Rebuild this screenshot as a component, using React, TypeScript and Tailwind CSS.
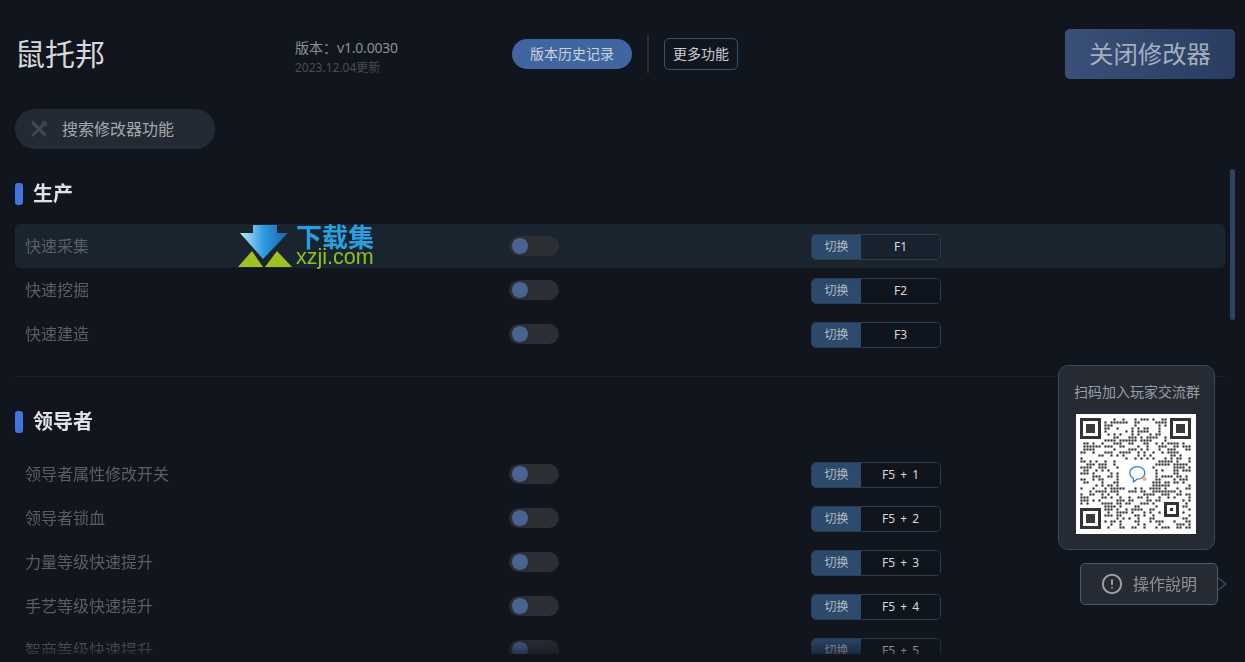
import { CircleAlert } from "lucide-react";

const font = { fontFamily: '"Noto Sans", "Noto Sans CJK SC", sans-serif' };

const sections = [
  {
    title: "生产",
    rows: [
      { name: "快速采集", key: "F1", active: true },
      { name: "快速挖掘", key: "F2" },
      { name: "快速建造", key: "F3" },
    ],
  },
  {
    title: "领导者",
    rows: [
      { name: "领导者属性修改开关", key: "F5 + 1" },
      { name: "领导者锁血", key: "F5 + 2" },
      { name: "力量等级快速提升", key: "F5 + 3" },
      { name: "手艺等级快速提升", key: "F5 + 4" },
      { name: "智商等级快速提升", key: "F5 + 5" },
    ],
  },
];

// fake but stable QR pattern
const QR_SIZE = 37;
function isReserved(x: number, y: number) {
  const finder = (x < 8 && y < 8) || (x > 28 && y < 8) || (x < 8 && y > 28);
  const center = Math.abs(x - 18) <= 5 && Math.abs(y - 18) <= 4;
  const align = x > 26 && x < 34 && y > 26 && y < 34;
  return finder || center || align;
}
function qrCells() {
  const cells: { x: number; y: number }[] = [];
  let seed = 20231204;
  for (let y = 0; y < QR_SIZE; y++) {
    for (let x = 0; x < QR_SIZE; x++) {
      seed = (seed * 1103515245 + 12345) & 0x7fffffff;
      const on = (seed >> 16) % 100 < 47;
      if (on && !isReserved(x, y)) cells.push({ x, y });
    }
  }
  return cells;
}

function Finder({ x, y }: { x: number; y: number }) {
  return (
    <g>
      <rect x={x} y={y} width="7" height="7" fill="#333" />
      <rect x={x + 1} y={y + 1} width="5" height="5" fill="#fff" />
      <rect x={x + 2} y={y + 2} width="3" height="3" fill="#3a3a3a" />
    </g>
  );
}

function QrCode() {
  return (
    <svg viewBox="-1.333 -1.333 40 40" className="block h-[120px] w-[120px] bg-white">
      {qrCells().map((c) => (
        <rect key={`${c.x}-${c.y}`} x={c.x + 0.14} y={c.y + 0.14} width="0.72" height="0.72" fill="#333" />
      ))}
      <Finder x={0} y={0} />
      <Finder x={30} y={0} />
      <Finder x={0} y={30} />
      <rect x="28" y="28" width="5" height="5" fill="#333" />
      <rect x="29" y="29" width="3" height="3" fill="#fff" />
      <rect x="30" y="30" width="1" height="1" fill="#333" />
      <path
        d="M16.600 18.300c0-1.300 1.200-2.100 2.500-2.100s2.500.8 2.500 2.100-1.200 2.100-2.500 2.100l-1.300.9v-1.200c-.7-.4-1.200-1-1.200-1.800z"
        fill="none"
        stroke="#3b82c4"
        strokeWidth="0.45"
      />
      <circle cx="21.500" cy="20.300" r="0.7" fill="#e8b56a" />
    </svg>
  );
}

function Toggle() {
  return (
    <div className="flex h-5 w-[50px] items-center rounded-full bg-[#2b2e33] pl-[3px]">
      <div className="h-4 w-4 rounded-full bg-[#4a6491]" />
    </div>
  );
}

function Hotkey({ value, active }: { value: string; active?: boolean }) {
  return (
    <div className="flex h-[26px] w-[130px] overflow-hidden rounded-[5px] border border-[#2f3d4d] text-xs">
      <div className="flex w-[49px] items-center justify-center bg-[#2c4a6c] text-[#b4bcc7]">切换</div>
      <div className={`flex flex-1 items-center justify-center text-[#d5d9de] [word-spacing:2px] ${active ? "bg-[#18222e]" : "bg-[#10151d]"}`}>
        {value}
      </div>
    </div>
  );
}

function Row({ name, keyName, active }: { name: string; keyName: string; active?: boolean }) {
  return (
    <div className={`flex h-11 items-center rounded-[5px] pl-[10px] ${active ? "bg-[#1a242f]" : ""}`}>
      <div className="w-[484px] text-base text-[#5a5f67]">{name}</div>
      <Toggle />
      <div className="ml-[252px] mt-[2px]">
        <Hotkey value={keyName} active={active} />
      </div>
    </div>
  );
}

function Logo() {
  return (
    <div className="absolute left-[238px] top-[224px] flex h-[44px] items-start">
      <svg width="54" height="44" viewBox="0 0 54 44">
        <defs>
          <linearGradient id="arrow" x1="0" x2="1" y1="0" y2="0">
            <stop offset="0" stopColor="#bfe8f8" />
            <stop offset="0.5" stopColor="#2d9ae0" />
            <stop offset="1" stopColor="#1d5fa8" />
          </linearGradient>
        </defs>
        <path d="M0 43L14 27 25 43Z" fill="#9cc31f" />
        <path d="M27 43L39 27 54 43Z" fill="#9cc31f" />
        <path d="M15 1H39V9H50L25 35 2 9H15Z" fill="url(#arrow)" />
      </svg>
      <div className="ml-[4px] flex flex-col" style={{ fontFamily: '"Liberation Sans", sans-serif' }}>
        <span
          className="text-[26px] font-bold leading-[23px] text-[#2a9fe0]"
          style={{ fontFamily: '"Noto Sans CJK SC", sans-serif' }}
        >
          下载集
        </span>
        <span className="text-[21.500px] leading-[20px] text-[#95c11f]">xzji.com</span>
      </div>
    </div>
  );
}

export default function App() {
  return (
    <div className="relative h-[662px] w-[1245px] overflow-hidden bg-[#11161e]" style={font}>
      {/* top bar */}
      <div className="flex h-[109px] items-start pl-[15px] pr-[10px]">
        <div className="mt-[30px] w-[280px] text-[30px] leading-[48px] text-[#d5d9de]">鼠托邦</div>
        <div className="mt-[38px] w-[217px]">
          <div className="text-sm leading-5 text-[#8b9097]">
            版本：<span className="tracking-[-0.2px]">v1.0.0030</span>
          </div>
          <div className="text-xs leading-5 text-[#474c55]">2023.12.04更新</div>
        </div>
        <div className="mt-[39px] flex h-[30px] w-[120px] items-center justify-center rounded-full bg-[#41659f] text-sm text-[#c9d2e0]">
          版本历史记录
        </div>
        <div className="ml-[15px] mt-[35px] h-[38px] w-[2px] bg-[#2b3038]" />
        <div className="ml-[15px] mt-[38px] flex h-8 w-[74px] items-center justify-center rounded-[5px] border border-[#34536e] text-sm text-[#c9ced5]">
          更多功能
        </div>
        <div className="ml-auto mt-[29px] flex h-[50px] w-[170px] items-center justify-center rounded-[5px] bg-gradient-to-r from-[#3a5078] to-[#2a3c62] pt-[1px] text-[24.400px] text-[#a5aebd]">
          关闭修改器
        </div>
      </div>

      {/* search */}
      <div className="ml-[15px] flex h-10 w-[200px] items-center rounded-full bg-[#242a33] pl-[15px]">
        <svg width="18" height="18" viewBox="0 0 18 18" fill="none" stroke="#43484f">
          {/* screwdriver */}
          <path d="M1.500 1.500L3 .8 4.200 2 16.500 14.300 14.500 16.500 2.200 4.200Z" fill="#43484f" strokeWidth="0.3" />
          {/* wrench */}
          <path d="M2 16L12.500 5.500" strokeWidth="2.600" />
          <path d="M11.500 3.800C11.800 1.800 14 .4 16.300 1.100L13.800 3.600 14.400 4.200 16.900 1.700C17.600 4 16.200 6.200 14.200 6.500Z" fill="#43484f" strokeWidth="0.3" />
        </svg>
        <span className="ml-[14px] text-base text-[#a4a8ae]">搜索修改器功能</span>
      </div>

      {/* list */}
      <div className="mt-[20px] flex h-[485px] overflow-hidden pl-[15px]">
        <div className="h-full w-[1210px] overflow-hidden [mask-image:linear-gradient(to_bottom,black_468px,rgba(0,0,0,0.4)_485px)]">
          {sections.map((s, i) => (
            <div key={s.title} className={i > 0 ? "mt-[20px] border-t border-[#1c222b] pt-[20px]" : ""}>
              <div className={`flex items-center ${i > 0 ? "mb-[5px] h-[50px]" : "h-[55px] pb-[6px]"}`}>
                <div className="h-[22px] w-2 rounded-[3px] bg-[#3f75dc]" />
                <div className="ml-[10px] text-xl font-bold text-[#dfe3e8]">{s.title}</div>
              </div>
              {s.rows.map((r) => (
                <Row key={r.name} name={r.name} keyName={r.key} active={r.active} />
              ))}
            </div>
          ))}
        </div>
        <div className="ml-[5px] h-[151px] w-[5px] rounded-sm bg-[#2c4460]" />
      </div>

      {/* QR panel */}
      <div className="absolute left-[1058px] top-[365px] flex h-[185px] w-[157px] flex-col items-start rounded-[10px] border border-[#39485a] bg-[#252a33] pl-[17px]">
        <div className="-ml-[2px] mt-[16px] whitespace-nowrap text-sm leading-[20px] text-[#9a9ea6]">扫码加入玩家交流群</div>
        <div className="mt-[12px]">
          <QrCode />
        </div>
      </div>

      {/* help button */}
      <div className="absolute left-[1080px] top-[563px] flex h-[42px] w-[138px] items-center rounded-[5px] border border-[#4a5a6b] bg-[#252a33] pl-[20px]">
        <CircleAlert size={22} color="#9a9ea6" strokeWidth={2.2} />
        <span className="ml-[10px] text-base text-[#8e939b]">操作說明</span>
      </div>
      <svg className="absolute left-[1218px] top-[577px]" width="9" height="14" viewBox="0 0 9 14" fill="none">
        <path d="M0 1L8 7 0 13" stroke="#3f4e5e" strokeWidth="1.200" />
      </svg>

      <Logo />
    </div>
  );
}
